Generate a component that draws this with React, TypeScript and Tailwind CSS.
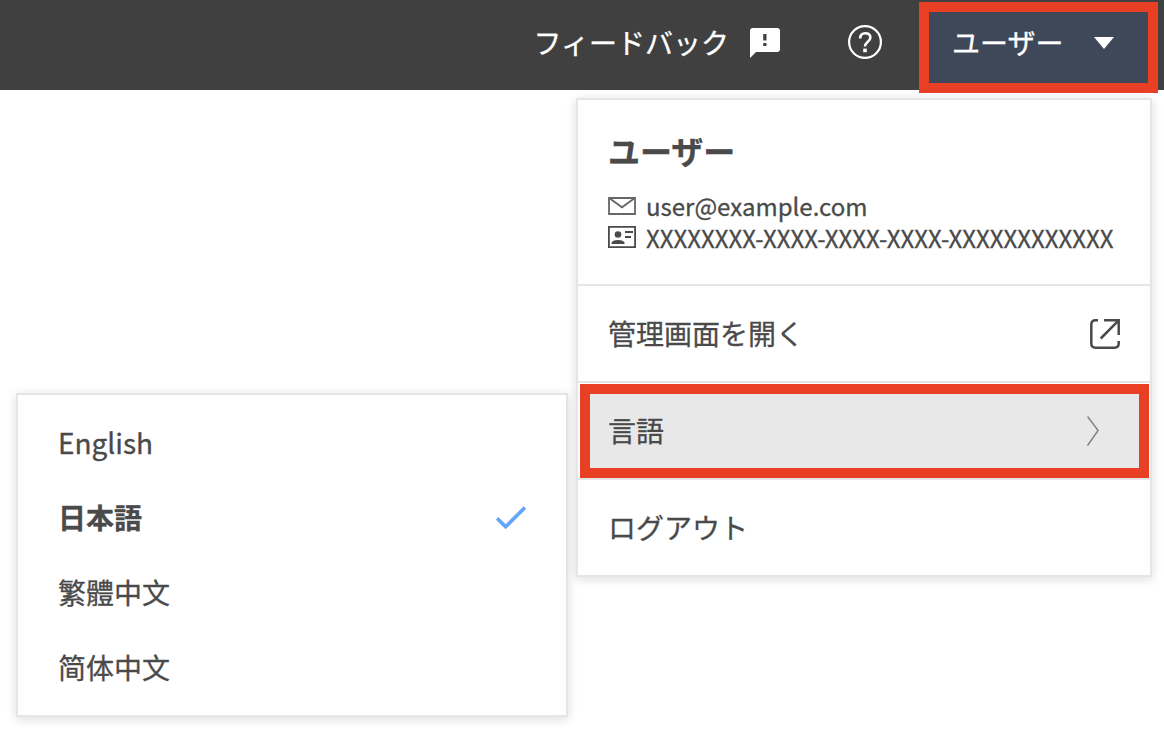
import type { ReactNode } from 'react';
import { clsx } from 'clsx';

const languages = [
  { code: 'en', label: 'English', font: 'font-["Noto_Sans_CJK_JP",sans-serif]' },
  { code: 'ja', label: '日本語', font: 'font-["Noto_Sans_CJK_JP",sans-serif]' },
  { code: 'zh-TW', label: '繁體中文', font: 'font-["Noto_Sans_CJK_TC",sans-serif]' },
  { code: 'zh-CN', label: '简体中文', font: 'font-["Noto_Sans_CJK_SC",sans-serif]' },
];

function FeedbackIcon() {
  return (
    <svg className="w-[30px] h-[30px]" viewBox="0 0 30 30">
      <path
        fill="#fff"
        fillRule="evenodd"
        d="M3 0H27Q30 0 30 3V21Q30 24 27 24H6L0 30V3Q0 0 3 0ZM13.2 6V12.5H16.5V6ZM13.2 15V18H16.5V15Z"
      />
    </svg>
  );
}

function HelpIcon() {
  return (
    <svg className="w-[34px] h-[34px]" viewBox="0 0 34 34" fill="none" stroke="#fff">
      <circle cx="17" cy="17" r="15.9" strokeWidth="2.2" />
      <path d="M12.2 13.4C12.2 10 14.2 8.2 17.2 8.2S22.4 9.8 22.4 12.6C22.4 16.4 17 17 17 21.6" strokeWidth="2.6" />
      <path d="M17 23.6V27.2" strokeWidth="3.6" />
    </svg>
  );
}

function MailIcon() {
  return (
    <svg className="w-7 h-[18px]" viewBox="0 0 28 18" fill="none" stroke="#666" strokeWidth="1.8">
      <path d="M1 1H27V17H1Z" />
      <path d="M1.5 1.2L14 10.3L26.5 1.2" />
    </svg>
  );
}

function IdCardIcon() {
  return (
    <svg className="w-7 h-[22px]" viewBox="0 0 28 22" fill="none" stroke="#4a4a4a">
      <path d="M.9 .9H27.1V21.1H.9Z" strokeWidth="1.8" />
      <circle cx="10" cy="8.5" r="3.3" fill="#4a4a4a" stroke="none" />
      <path d="M3.5 18V16.5C4.5 14.8 7 14 10 14S15.5 14.8 16.5 16.5V18Z" fill="#4a4a4a" stroke="none" />
      <path d="M17 6H25M17 11H23" strokeWidth="1.8" />
    </svg>
  );
}

function OpenIcon() {
  return (
    <svg className="w-[30px] h-[30px]" viewBox="0 0 30 30" fill="none" stroke="#4a4a4a" strokeWidth="2.5">
      <path d="M8 1.3H5.5Q1.3 1.3 1.3 5.5V24.5Q1.3 28.7 5.5 28.7H24.5Q28.7 28.7 28.7 24.5V22" />
      <path d="M14 1.3H28.7V16M28.7 1.3L10.7 19.5" />
    </svg>
  );
}

function ChevronIcon() {
  return (
    <svg className="w-3 h-[30px]" viewBox="0 0 12 30" fill="none" stroke="#808080" strokeWidth="1.5">
      <path d="M.5 .5L11.1 14.5L.5 29.5" />
    </svg>
  );
}

function CheckIcon() {
  return (
    <svg className="w-[30px] h-6" viewBox="0 0 30 24" fill="none" stroke="#64a4fa" strokeWidth="3.6">
      <path d="M1.1 12.3L9.6 20.8L28.9 1.6" />
    </svg>
  );
}

function MenuRow({ label, icon }: { label: string; icon?: ReactNode }) {
  return (
    <div className="h-[97px] border-t-2 border-[#e5e5e5] px-[30px] flex items-center justify-between">
      <span className="pb-0.5">{label}</span>
      {icon}
    </div>
  );
}

function Header() {
  return (
    <header className="h-[90px] bg-[#404040] text-white flex justify-end">
      <div className="h-[85px] flex items-center">
        <span className="pb-0.5">フィードバック</span>
        <div className="ml-[21px] mr-[68px]">
          <FeedbackIcon />
        </div>
        <div className="pb-0.5">
          <HelpIcon />
        </div>
      </div>
      <button className="relative z-10 ml-[37px] mt-0.5 mr-1.5 w-[239px] h-[91px] border-10 border-[#e94025] bg-[#3f4859] pl-[23px] pr-[34px] pb-2.5 flex items-center justify-between">
        <span className="pb-0.5">ユーザー</span>
        <svg className="w-5 h-3" viewBox="0 0 20 12">
          <path fill="#fff" d="M0 0H20L10 12Z" />
        </svg>
      </button>
    </header>
  );
}

function LanguageMenu() {
  const current = 'ja';

  return (
    <div className="w-[552px] h-[324px] mt-[295px] py-2.5 bg-white border-2 border-[#e5e5e5] shadow-[0_2px_10px_rgba(0,0,0,0.14)]">
      {languages.map((lang) => (
        <div
          key={lang.code}
          lang={lang.code}
          className={clsx(
            'h-[75px] pl-10 pr-10 flex items-center justify-between',
            lang.font,
            lang.code === current && 'font-bold'
          )}
        >
          <span className="pb-0.5">{lang.label}</span>
          {lang.code === current && <CheckIcon />}
        </div>
      ))}
    </div>
  );
}

function UserMenu() {
  return (
    <div className="w-[576px] h-[479px] bg-white border-2 border-[#e5e5e5] shadow-[0_2px_10px_rgba(0,0,0,0.14)]">
      {/* Account */}
      <div className="h-[184px] pt-[26px] pl-[30px]">
        <h2 className="text-[32px] leading-12 font-bold">ユーザー</h2>
        <div className="mt-4 text-2xl leading-8 whitespace-nowrap">
          <div className="flex items-center gap-2.5">
            <MailIcon />
            <span>user@example.com</span>
          </div>
          <div className="flex items-center gap-2.5">
            <div className="pb-0.5">
              <IdCardIcon />
            </div>
            <span>XXXXXXXX-XXXX-XXXX-XXXX-XXXXXXXXXXXX</span>
          </div>
        </div>
      </div>

      <MenuRow label="管理画面を開く" icon={<OpenIcon />} />

      {/* Language */}
      <div className="h-[97px] border-t-2 border-[#e5e5e5] pt-px pl-0.5">
        <div className="w-[569px] h-[94px] border-10 border-[#e94025] bg-[#e8e8e8] pl-[18px] pr-10 flex items-center justify-between">
          <span className="pb-0.5">言語</span>
          <ChevronIcon />
        </div>
      </div>

      <MenuRow label="ログアウト" />
    </div>
  );
}

export default function App() {
  return (
    <div
      lang="ja"
      className='w-[1164px] h-[730px] overflow-hidden bg-white text-[#4a4a4a] text-[28px] leading-[42px] font-["Noto_Sans_CJK_JP",sans-serif] [-webkit-text-stroke:0.3px]'
    >
      <Header />
      <main className="pt-2 pl-4 flex items-start gap-2">
        <LanguageMenu />
        <UserMenu />
      </main>
    </div>
  );
}
